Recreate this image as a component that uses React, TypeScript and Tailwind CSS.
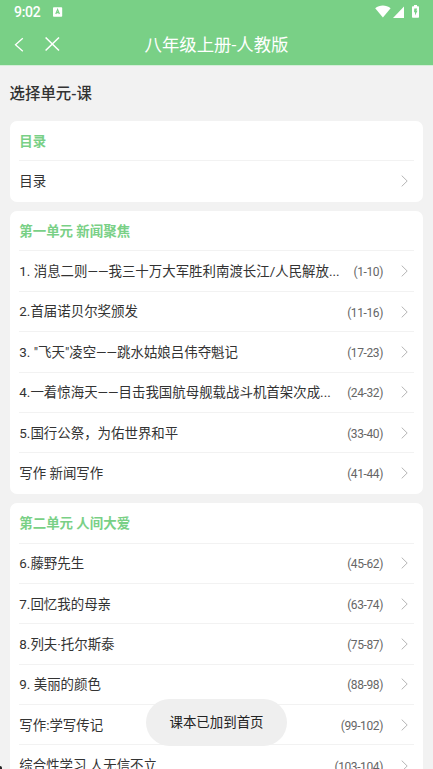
import React from 'react';

interface Lesson {
  title: string;
  pages?: string;
}

interface Unit {
  name: string;
  lessons: Lesson[];
}

const units: Unit[] = [
  { name: '目录', lessons: [{ title: '目录' }] },
  {
    name: '第一单元 新闻聚焦',
    lessons: [
      { title: '1. 消息二则——我三十万大军胜利南渡长江/人民解放...', pages: '(1-10)' },
      { title: '2.首届诺贝尔奖颁发', pages: '(11-16)' },
      { title: '3. "飞天"凌空——跳水姑娘吕伟夺魁记', pages: '(17-23)' },
      { title: '4.一着惊海天——目击我国航母舰载战斗机首架次成...', pages: '(24-32)' },
      { title: '5.国行公祭，为佑世界和平', pages: '(33-40)' },
      { title: '写作 新闻写作', pages: '(41-44)' },
    ],
  },
  {
    name: '第二单元 人间大爱',
    lessons: [
      { title: '6.藤野先生', pages: '(45-62)' },
      { title: '7.回忆我的母亲', pages: '(63-74)' },
      { title: '8.列夫·托尔斯泰', pages: '(75-87)' },
      { title: '9. 美丽的颜色', pages: '(88-98)' },
      { title: '写作:学写传记', pages: '(99-102)' },
      { title: '综合性学习 人无信不立', pages: '(103-104)' },
    ],
  },
];

const StatusBar: React.FC = () => (
  <div className="flex h-6 items-center pl-[14px] pr-[14px]">
    <span className="w-[27px] text-[14px] leading-6 font-medium tracking-[-0.3px]">9:02</span>
    <svg className="ml-[12px]" width="10" height="10" viewBox="0 0 10 10">
      <rect x="0" y="0.2" width="9.2" height="9.6" rx="0.8" fill="#fff" />
      <path d="M2.8 7 4.6 2.6 6.4 7M3.4 5.6h2.4" fill="none" stroke="#79d086" strokeWidth="1.2" />
    </svg>
    <div className="ml-auto flex items-center pb-px">
      <svg width="16" height="13" viewBox="0 0 16 13">
        <path d="M0.2 3.2C4.6-.3 11.2-.3 15.6 3.2L7.9 12.6Z" fill="#fff" />
      </svg>
      <svg className="ml-[2px]" width="11" height="12" viewBox="0 0 11 12">
        <path d="M11 0.5V12H0Z" fill="#fff" />
      </svg>
      <svg className="ml-[8px]" width="7" height="13" viewBox="0 0 7 13">
        <path d="M2 0h3v1.2h1.2a.8.8 0 0 1 .8.8v10a.8.8 0 0 1-.8.8H.8A.8.8 0 0 1 0 12V2a.8.8 0 0 1 .8-.8H2Z" fill="#fff" />
        <path d="M2.3 3.4h2.8L4.4 5.8h1.1L3 10.4V7.2H2Z" fill="#79d086" />
      </svg>
    </div>
  </div>
);

const NavBar: React.FC = () => (
  <div className="relative flex h-[41px] items-center pl-[14px]">
    <button aria-label="返回">
      <svg width="10" height="16" viewBox="0 0 10 16" fill="none" stroke="#fff" strokeWidth="1.3">
        <path d="M8.8 1.2 1.5 7.7l7.3 6.5" />
      </svg>
    </button>
    <button aria-label="关闭" className="ml-[21px]">
      <svg width="15" height="15" viewBox="0 0 15 15" fill="none" stroke="#fff" strokeWidth="1.5">
        <path d="m.6.5 13.4 13M14 .5.6 13.5" />
      </svg>
    </button>
    <h1 className="pointer-events-none absolute inset-x-0 text-center text-[17.4px] leading-[42px]">八年级上册-人教版</h1>
  </div>
);

const LessonRow: React.FC<{ lesson: Lesson }> = ({ lesson }) => (
  <li className="flex h-[40.37px] items-center border-b border-[#f2f2f2] pr-[6px] last:border-b-0">
    <span className="min-w-0 flex-1 pt-[2px] pl-[0.2px] whitespace-nowrap">{lesson.title}</span>
    {lesson.pages && <span className="pt-[2px] text-[12px] tracking-[-0.4px] text-[#666]">{lesson.pages}</span>}
    <svg className="ml-[18px] shrink-0" width="7" height="12" viewBox="0 0 7 12" fill="none" stroke="#b5b5b5" strokeWidth="1">
      <path d="M.7.6 6.2 6 .7 11.4" />
    </svg>
  </li>
);

const UnitCard: React.FC<{ unit: Unit }> = ({ unit }) => (
  <section className="shrink-0 rounded-[7px] bg-white px-[9.5px] text-[13.45px] text-[#333]">
    <h3 className="h-[40.37px] border-b border-[#f2f2f2] pl-[0.2px] leading-[41px] font-bold text-[#79d086]">{unit.name}</h3>
    <ul>
      {unit.lessons.map(lesson => (
        <LessonRow key={lesson.title} lesson={lesson} />
      ))}
    </ul>
  </section>
);

const App: React.FC = () => {
  return (
    <div className="relative flex h-[769px] w-[433px] flex-col overflow-hidden bg-[#f2f2f2] font-[Roboto,'Noto_Sans_CJK_SC',sans-serif]">
      <header className="h-[65px] shrink-0 bg-[#79d086] text-white">
        <StatusBar />
        <NavBar />
      </header>
      <main className="flex min-h-0 flex-1 flex-col overflow-hidden border-t border-[#d5eed9] px-[9.6px]">
        <h2 className="h-[54.8px] shrink-0 text-[15.4px] leading-[57px] font-medium text-[#333]">选择单元-课</h2>
        <div className="flex flex-col gap-[9.6px]">
          {units.map(unit => (
            <UnitCard key={unit.name} unit={unit} />
          ))}
        </div>
      </main>
      <div className="absolute top-[699px] left-[146px] flex h-[47px] w-[141px] items-center justify-center rounded-full bg-[#efefef] pt-px text-[13.45px] text-[#222]">
        课本已加到首页
      </div>
      {/* tip of the floating handle at the screen edge */}
      <div className="absolute bottom-0 left-0 h-[3px] w-[2px] rounded-tr-full bg-[#222]" />
    </div>
  );
};

export default App;
